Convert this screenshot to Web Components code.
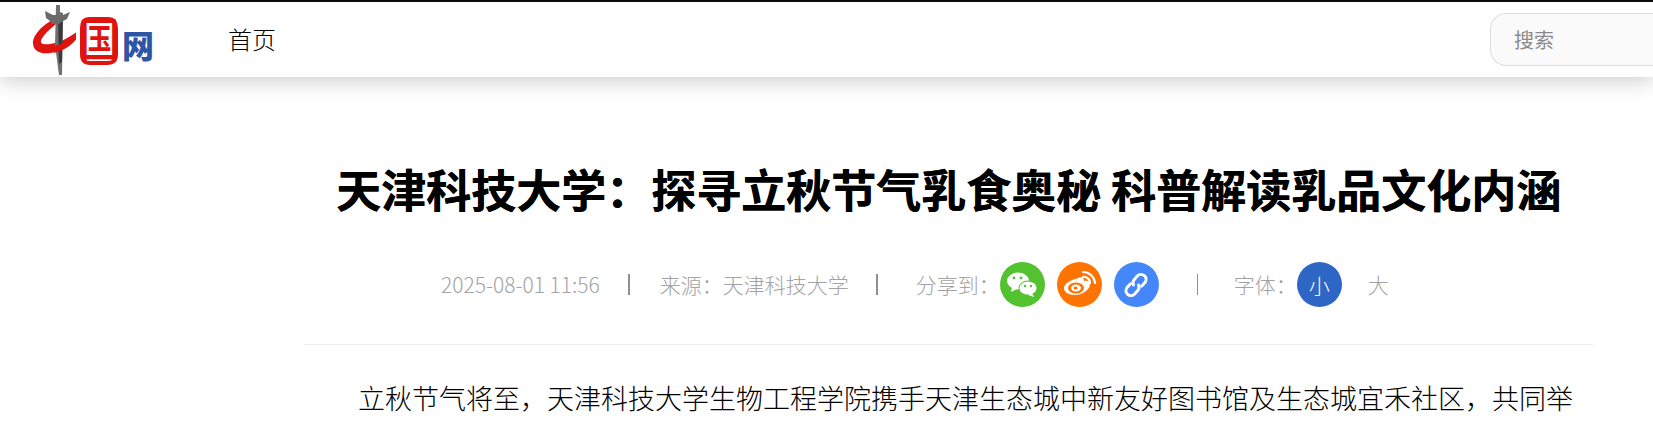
<!DOCTYPE html>
<html lang="zh-CN"><head><meta charset="utf-8"><title>天津科技大学</title>
<style>
html,body{margin:0;padding:0;height:426px;overflow:hidden;background:#fff;font-family:"Noto Sans CJK SC","Noto Sans",sans-serif}
</style></head><body>
<site-header></site-header>
<article-view></article-view>
<script>
const CJK='"Noto Sans CJK SC","Noto Sans",sans-serif';
class SiteLogo extends HTMLElement{constructor(){super();this.attachShadow({mode:'open'}).innerHTML=`<style>:host{display:block;width:124px;height:75px;flex:none}svg{display:block}</style>
<svg width="124" height="75" viewBox="0 0 124 75">
<path d="M22 17C12 22 0 33 1 42c1 9 11 11 22 8 13-4 20-14 29-25-10 7-18 13-29 16-8 2-15 2-14-2 1-5 9-12 15-17z" fill="#e0140e"/>
<path d="M24 3h4v7l3 1-1 62h-3l-4-30z" fill="#707070"/><path d="M26 14h5l-1 46-3 2z" fill="#3a3a3a"/>
<path d="M13 9l8 4h10l7-3-3 7-6 3-2 2h-7l-2-3-4-3z" fill="#6a6a6a"/>
<path d="M22 44c10-2 20-9 30-19-6 12-14 22-30 26z" fill="#e0140e"/>
<text transform="translate(47.5 55) scale(1 1.2)" font-size="40" font-weight="500" fill="#e0140e" font-family='${CJK}'>国</text>
<path d="M57 13h19c9 0 13 6 13 15v24c0 10-5 14-14 14H58c-9 0-12-6-12-14V26c0-8 3-13 11-13z" fill="none" stroke="#fff" stroke-width="4"/>
<path d="M57 17h19c6 0 8 4 8 11v24c0 7-3 9-9 9H58c-6 0-8-3-8-9V26c0-6 2-9 7-9z" fill="none" stroke="#e0140e" stroke-width="4"/>
<text x="90" y="56" font-size="32" font-weight="900" fill="#2f55a5" font-family='${CJK}'>网</text>
</svg>`}}
customElements.define('site-logo',SiteLogo);
class SiteHeader extends HTMLElement{constructor(){super();this.attachShadow({mode:'open'}).innerHTML=`<style>
:host{display:flex;align-items:center;box-sizing:border-box;height:77px;background:#fff;border-top:2px solid #0c0c0c;box-shadow:0 4px 20px rgba(0,0,0,.2);padding-left:32px;position:relative}
nav{margin-left:72px;font-size:24px;color:#000;font-weight:300;line-height:1;margin-top:-2px}
.s{margin-left:auto;width:163px;box-sizing:border-box;height:53px;border:1px solid #ddd;border-right:0;border-radius:16px 0 0 16px;background:#fafafa;color:#8a8a8a;font-size:20px;display:flex;align-items:center;padding-left:23px}
</style><site-logo></site-logo><nav>首页</nav><div class="s">搜索</div>`}}
customElements.define('site-header',SiteHeader);
class ShareBtn extends HTMLElement{constructor(){super();this.attachShadow({mode:'open'}).innerHTML=`<style>:host{display:inline-flex;width:45px;height:45px;border-radius:50%;align-items:center;justify-content:center;background:var(--c);color:#fff;font-size:21px;font-weight:300;flex:none}svg{display:block}</style><slot></slot>`}}
customElements.define('share-btn',ShareBtn);
class ArticleView extends HTMLElement{constructor(){super();this.attachShadow({mode:'open'}).innerHTML=`<style>
:host{display:block;width:1289px;margin:0 0 0 304px}
h1{margin:78px 0 0;font-size:45px;line-height:68px;font-weight:700;color:#000;text-align:center;white-space:nowrap;text-shadow:.5px 0 0 #000}
.meta{display:flex;align-items:center;height:45px;margin-top:39px;color:#a3a3a3;font-size:21px;font-weight:300;white-space:nowrap;padding-left:137px}
.meta span{margin-top:-2px}
.bar{width:2px;height:21px;background:#8f8f8f;flex:none}
.bar.t{width:1px}
hr{border:0;height:1px;background:#eee;margin:37px 0 0}
p{margin:29px 0 0;font-size:27px;line-height:48px;text-indent:2em;color:#000;font-weight:300;white-space:nowrap}
</style>
<h1>天津科技大学&#xFF1A;探寻立秋节气乳食奥秘 科普解读乳品文化内涵</h1>
<div class="meta">
<span>2025-08-01 11:56</span><i class="bar" style="margin:0 30px 0 28px"></i><span>来源&#xFF1A;天津科技大学</span><i class="bar" style="margin:0 38px 0 27px"></i><span>分享到&#xFF1A;</span>
<share-btn style="--c:#52c22f"><svg width="32" height="28" viewBox="0 0 32 28" fill="#fff"><ellipse cx="12" cy="10" rx="11" ry="8.5"/><path d="M6 16l-1 5 6-3z"/><ellipse cx="22" cy="17" rx="9.6" ry="7.6" fill="#52c22f"/><ellipse cx="22" cy="17" rx="8.6" ry="6.6"/><path d="M26 22l2 4-6-2z"/><g fill="#52c22f"><circle cx="8" cy="7" r="1.4"/><circle cx="15" cy="7" r="1.4"/><circle cx="19" cy="15" r="1.2"/><circle cx="25" cy="15" r="1.2"/></g></svg></share-btn>
<share-btn style="--c:#ff7300;margin-left:12px"><svg width="34" height="30" viewBox="0 0 34 30" fill="#fff"><path d="M14 9c5-3 8-2 8 2 3-1 6 0 6 3 0 6-8 11-15 11S2 22 2 18c0-3 5-8 12-9z"/><ellipse cx="14" cy="18" rx="8" ry="5.5" fill="#ff7300"/><ellipse cx="14" cy="18" rx="5" ry="3.5"/><ellipse cx="13.5" cy="18" rx="2" ry="1.5" fill="#ff7300"/><path d="M21 7a6 6 0 0 1 7 6M21 2a12 12 0 0 1 12 11" fill="none" stroke="#fff" stroke-width="2.2" stroke-linecap="round"/></svg></share-btn>
<share-btn style="--c:#4487fb;margin-left:12px"><svg width="28" height="28" viewBox="0 0 28 28" fill="none" stroke="#fff" stroke-width="3" stroke-linecap="round"><g transform="rotate(-48 14 14)"><path d="M11 9H6.500a5 5 0 0 0 0 10H11a5 5 0 0 0 4.600-3"/><path d="M17 19h4.500a5 5 0 0 0 0-10H17a5 5 0 0 0-4.600 3"/></g></svg></share-btn>
<i class="bar t" style="margin:0 36px 0 38px"></i><span>字体&#xFF1A;</span>
<share-btn style="--c:#2d66c4">小</share-btn><span style="margin-left:26px">大</span>
</div>
<hr>
<p>立秋节气将至&#xFF0C;天津科技大学生物工程学院携手天津生态城中新友好图书馆及生态城宜禾社区&#xFF0C;共同举</p>`}}
customElements.define('article-view',ArticleView);
</script></body></html>
